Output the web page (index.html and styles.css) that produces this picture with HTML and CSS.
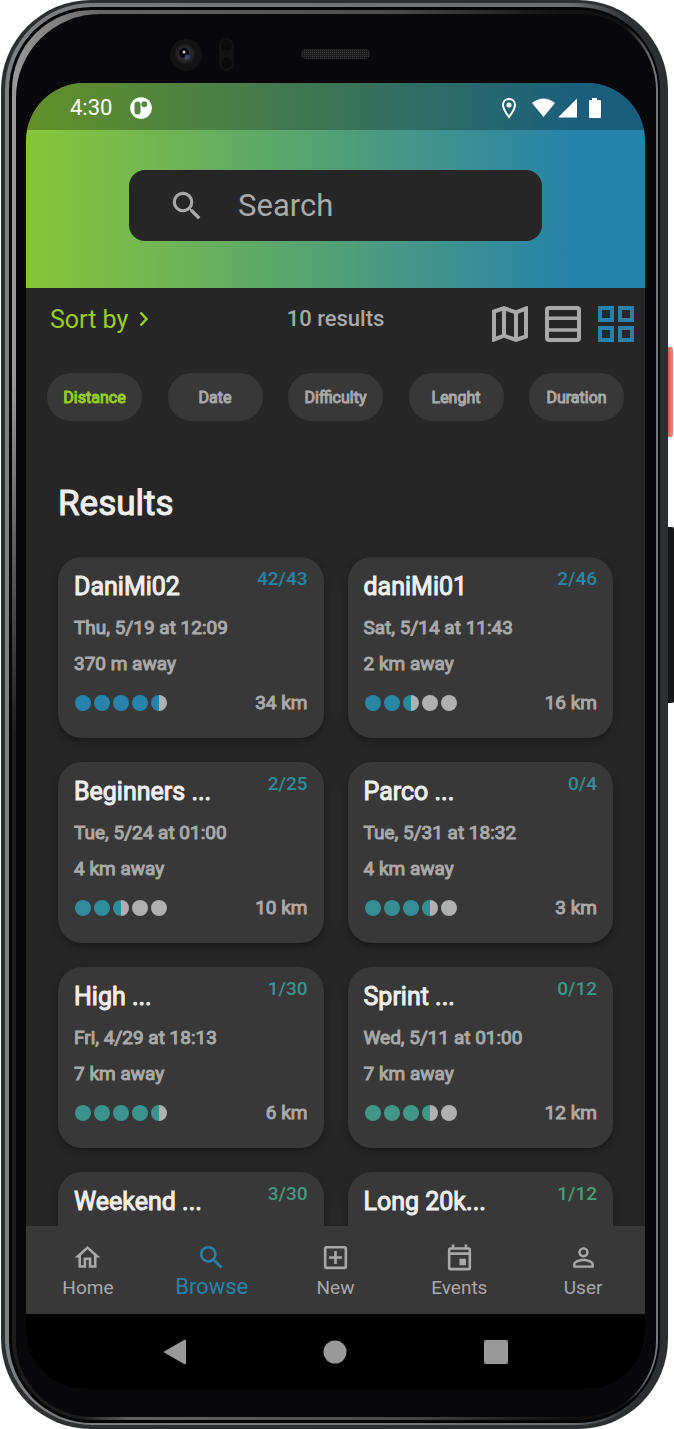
FILE: index.html
```html
<!DOCTYPE html>
<html lang="en">
<head>
<meta charset="utf-8">
<meta name="viewport" content="width=device-width, initial-scale=1">
<title>Browse</title>
<link rel="stylesheet" href="styles.css">
</head>
<body>
<div class="device">
  <span class="side-key power"></span>
  <span class="side-key volume"></span>
  <div class="rim"><div class="groove"><div class="bezel"><div class="glass">
    <svg class="sensors" viewBox="0 0 619 69" aria-hidden="true">
      <defs>
        <pattern id="mesh" width="2" height="2" patternUnits="userSpaceOnUse"><rect width="2" height="2" fill="#1c1c1c"/><rect width="1" height="1" fill="#353535"/></pattern>
        <radialGradient id="lens"><stop offset="0" stop-color="#30364a"/><stop offset=".6" stop-color="#2b2b2d"/><stop offset="1" stop-color="#1a1a1b"/></radialGradient>
      </defs>
      <circle cx="160" cy="41" r="16" fill="#131314"/>
      <circle cx="159" cy="40" r="10" fill="url(#lens)"/>
      <circle cx="158" cy="39" r="5" fill="#08080c"/>
      <circle cx="161" cy="43" r="2.500" fill="#3a4670"/>
      <circle cx="158" cy="38" r="1.500" fill="#c8c8c8"/>
      <rect x="193" y="24" width="15" height="33" rx="7.500" fill="#121213"/>
      <circle cx="200.500" cy="31" r="5.500" fill="#0a0a0b"/><circle cx="200.500" cy="49" r="5.500" fill="#0a0a0b"/>
      <rect x="275" y="35" width="69" height="10" rx="5" fill="url(#mesh)"/>
    </svg>
    <div class="screen">
      <header class="header">
        <div class="status">
          <span class="clock">4:30</span>
          <svg width="22" height="22" viewBox="0 0 22 22" aria-hidden="true"><circle cx="11" cy="11" r="10.800" fill="#fff"/><rect x="4.500" y="4.500" width="6" height="13" rx="3" fill="#53853f"/><circle cx="14.300" cy="7.200" r="2.900" fill="#53853f"/></svg>
          <svg class="status-right" width="102" height="24" viewBox="0 0 102 24" fill="#fff" aria-hidden="true">
            <path fill="none" stroke="#fff" stroke-width="2" d="M9 3c-3.500 0-6 2.600-6 6 0 4.200 6 12 6 12s6-7.800 6-12c0-3.400-2.500-6-6-6z"/><circle cx="9" cy="9" r="2.500"/>
            <path d="M32 7Q43.500-2 55 7L43.500 21z"/><path d="M58 21.500L77 2.500V21.500z"/>
            <path d="M92 2h5v2h3a1 1 0 0 1 1 1v16a1 1 0 0 1-1 1H90a1 1 0 0 1-1-1V5a1 1 0 0 1 1-1h2z"/>
          </svg>
        </div>
        <label class="search">
          <svg width="38" height="38" viewBox="0 0 24 24" fill="#a9a9a9" aria-hidden="true"><path d="M15.500 14h-.79l-.28-.27A6.470 6.470 0 0 0 16 9.500 6.500 6.500 0 1 0 9.500 16c1.610 0 3.090-.59 4.230-1.570l.27.28v.79l5 4.990L20.490 19zm-6 0C7.010 14 5 11.990 5 9.500S7.010 5 9.500 5 14 7.010 14 9.500 11.990 14 9.500 14z"/></svg>
          <input type="search" placeholder="Search" aria-label="Search">
        </label>
      </header>
      <div class="toolbar">
        <button class="sort">Sort by <svg width="24" height="24" viewBox="0 0 24 24" fill="none" stroke="currentColor" stroke-width="2.500" aria-hidden="true"><path d="M8.500 5.500L14.500 12 8.500 18.500"/></svg></button>
        <span class="total">10 results</span>
        <div class="views">
          <button aria-label="Map"><svg viewBox="0 0 24 24" fill="currentColor"><path d="M20.500 3l-.16.03L15 5.100 9 3 3.360 4.900c-.21.070-.36.250-.36.480V20.500c0 .280.220.500.500.500l.16-.03L9 18.900l6 2.100 5.640-1.900c.21-.07.360-.25.360-.48V3.500c0-.28-.22-.5-.5-.5zM10 5.470l4 1.400v11.660l-4-1.400V5.470zm-5 .99l3-1.010v11.700l-3 1.160V6.460zm14 11.080l-3 1.010V6.860l3-1.160v11.840z"/></svg></button>
          <button aria-label="List"><svg viewBox="0 0 24 24" fill="none" stroke="currentColor" stroke-width="2"><rect x="4" y="4" width="16" height="16" rx="1"/><path d="M4 9.100h16M4 15h16" stroke-width="1.700"/></svg></button>
          <button class="active" aria-label="Grid"><svg viewBox="0 0 24 24" fill="none" stroke="currentColor" stroke-width="2"><path d="M4 4h6v6H4zM14 4h6v6h-6zM4 14h6v6H4zM14 14h6v6h-6z"/></svg></button>
        </div>
      </div>
      <div class="chips">
        <button class="chip active">Distance</button>
        <button class="chip">Date</button>
        <button class="chip">Difficulty</button>
        <button class="chip">Lenght</button>
        <button class="chip">Duration</button>
      </div>
      <main class="results">
        <h1>Results</h1>
        <div class="grid">
          <article class="card c1"><div class="row"><h2>DaniMi02</h2><span class="count">42/43</span></div><p>Thu, 5/19 at 12:09</p><p>370 m away</p><div class="row foot"><span class="dots"><i class="on"></i><i class="on"></i><i class="on"></i><i class="on"></i><i class="half"></i></span><span>34 km</span></div></article>
          <article class="card c2"><div class="row"><h2>daniMi01</h2><span class="count">2/46</span></div><p>Sat, 5/14 at 11:43</p><p>2 km away</p><div class="row foot"><span class="dots"><i class="on"></i><i class="on"></i><i class="half"></i><i></i><i></i></span><span>16 km</span></div></article>
          <article class="card c3"><div class="row"><h2>Beginners ...</h2><span class="count">2/25</span></div><p>Tue, 5/24 at 01:00</p><p>4 km away</p><div class="row foot"><span class="dots"><i class="on"></i><i class="on"></i><i class="half"></i><i></i><i></i></span><span>10 km</span></div></article>
          <article class="card c4"><div class="row"><h2>Parco ...</h2><span class="count">0/4</span></div><p>Tue, 5/31 at 18:32</p><p>4 km away</p><div class="row foot"><span class="dots"><i class="on"></i><i class="on"></i><i class="on"></i><i class="half"></i><i></i></span><span>3 km</span></div></article>
          <article class="card c5"><div class="row"><h2>High ...</h2><span class="count">1/30</span></div><p>Fri, 4/29 at 18:13</p><p>7 km away</p><div class="row foot"><span class="dots"><i class="on"></i><i class="on"></i><i class="on"></i><i class="on"></i><i class="half"></i></span><span>6 km</span></div></article>
          <article class="card c6"><div class="row"><h2>Sprint ...</h2><span class="count">0/12</span></div><p>Wed, 5/11 at 01:00</p><p>7 km away</p><div class="row foot"><span class="dots"><i class="on"></i><i class="on"></i><i class="on"></i><i class="half"></i><i></i></span><span>12 km</span></div></article>
          <article class="card c7"><div class="row"><h2>Weekend ...</h2><span class="count">3/30</span></div></article>
          <article class="card c8"><div class="row"><h2>Long 20k...</h2><span class="count">1/12</span></div></article>
        </div>
      </main>
      <nav class="tabs">
        <a href="#home"><svg viewBox="0 0 24 24" fill="currentColor"><path d="M12 5.690l5 4.500V18h-2v-6H9v6H7v-7.810l5-4.500M12 3L2 12h3v8h6v-6h2v6h6v-8h3L12 3z"/></svg>Home</a>
        <a class="active" href="#browse"><svg viewBox="0 0 24 24" fill="currentColor"><path d="M15.500 14h-.79l-.28-.27A6.470 6.470 0 0 0 16 9.500 6.500 6.500 0 1 0 9.500 16c1.610 0 3.090-.59 4.230-1.570l.27.28v.79l5 4.990L20.490 19zm-6 0C7.010 14 5 11.990 5 9.500S7.010 5 9.500 5 14 7.010 14 9.500 11.990 14 9.500 14z"/></svg>Browse</a>
        <a href="#new"><svg viewBox="0 0 24 24" fill="currentColor"><path d="M19 3H5a2 2 0 0 0-2 2v14a2 2 0 0 0 2 2h14a2 2 0 0 0 2-2V5a2 2 0 0 0-2-2zm0 16H5V5h14v14zm-8-2h2v-4h4v-2h-4V7h-2v4H7v2h4z"/></svg>New</a>
        <a href="#events"><svg viewBox="0 0 24 24" fill="currentColor"><path d="M19 4h-1V2h-2v2H8V2H6v2H5a2 2 0 0 0-2 2v14a2 2 0 0 0 2 2h14a2 2 0 0 0 2-2V6a2 2 0 0 0-2-2zm0 16H5V10h14v10zm0-12H5V6h14v2zm-7 5h5v5h-5z"/></svg>Events</a>
        <a href="#user"><svg viewBox="0 0 24 24" fill="currentColor"><path d="M12 5.900a2.100 2.100 0 1 1 0 4.200 2.100 2.100 0 0 1 0-4.200m0 9c2.970 0 6.100 1.460 6.100 2.100v1.100H5.900V17c0-.64 3.130-2.100 6.100-2.100M12 4C9.790 4 8 5.790 8 8s1.790 4 4 4 4-1.790 4-4-1.790-4-4-4zm0 9c-2.670 0-8 1.340-8 4v3h16v-3c0-2.660-5.330-4-8-4z"/></svg>User</a>
      </nav>
      <div class="system">
        <button aria-label="Back"><svg width="24" height="26" viewBox="0 0 24 26"><path d="M2 13L22 1.500V24.500z" fill="#999" stroke="#999" stroke-width="2" stroke-linejoin="round"/></svg></button>
        <button aria-label="Home screen"><svg width="24" height="24" viewBox="0 0 24 24"><circle cx="12" cy="12" r="11.500" fill="#999"/></svg></button>
        <button aria-label="Recent apps"><svg width="24" height="24" viewBox="0 0 24 24"><rect width="24" height="24" rx="2" fill="#999"/></svg></button>
      </div>
    </div>
  </div></div></div></div>
</div>
</body>
</html>
```
FILE: styles.css
```css
* { box-sizing: border-box; }
body {
  margin: 0;
  background: #fff;
  font-family: Roboto, "Liberation Sans", sans-serif;
  color: #a9a9a9;
}
h1, h2, p { margin: 0; }
button {
  font: inherit;
  color: inherit;
  background: none;
  border: 0;
  padding: 0;
}
svg { display: block; }

/* Phone body */
.device {
  position: relative;
  height: 100vh;
  min-height: 900px;
  margin: 0 6px 0 1px;
  padding: 3px 3px 4px 4px;
  border-radius: 90px;
  background: #2c2f2f;
}
.rim, .groove, .bezel, .glass { height: 100%; }
.rim {
  padding: 4px 5px 2px 4px;
  border-radius: 87px;
  background: linear-gradient(90deg, #7c8083 0, #6a6e71 86%, #2c2f31 95%);
}
.groove {
  padding: 3px 2px 3px 3px;
  border-radius: 83px;
  background: #050506;
}
.bezel {
  padding: 4px 2px 3px 4px;
  border-radius: 80px;
  background:
    radial-gradient(ellipse 120px 900px at 0 90%, #1c1c1c 60%, transparent),
    linear-gradient(90deg, #999 0, #666 14%, #4a4a4a 60%, #111 85%, #111 95%, #777 99%);
}
.glass {
  display: flex;
  flex-direction: column;
  padding: 0 11px 28px 10px;
  border-radius: 84px 76px 76px 76px;
  background: #08080a;
}
.sensors { width: 100%; height: 69px; flex: none; }
.side-key { position: absolute; left: 100%; width: 5px; }
.power { top: 347px; height: 90px; border-radius: 0 2px 2px 0; background: linear-gradient(90deg, #d9604c, #ee8a75); }
.volume { top: 527px; height: 176px; width: 6px; border-radius: 0 2px 2px 0; background: #161616; }

.screen {
  flex: 1;
  min-height: 0;
  display: flex;
  flex-direction: column;
  overflow: hidden;
  border-radius: 58px;
  background: #262626;
}

/* Header */
.header {
  flex: none;
  padding-bottom: 47px;
  background: linear-gradient(90deg, #87c43a 2%, #2682aa 89%);
}
.status {
  display: flex;
  align-items: center;
  gap: 18px;
  height: 47px;
  padding: 3px 43px 0 44px;
  background: rgba(0, 0, 0, .27);
  color: #fff;
}
.clock { font-size: 22px; line-height: 28px; }
.status-right { margin-left: auto; }
.search {
  display: flex;
  align-items: center;
  gap: 32px;
  width: 66.7%;
  height: 71px;
  margin: 40px auto 0;
  padding: 0 39px;
  border-radius: 16px;
  background: #262626;
}
.search svg { flex: none; }
.search input {
  flex: 1;
  min-width: 0;
  padding: 0;
  border: 0;
  outline: 0;
  background: none;
  font: 31px/40px Roboto, "Liberation Sans", sans-serif;
  color: #a9a9a9;
}
.search input::placeholder { color: #a9a9a9; opacity: 1; }

/* Emphasised text: regular letterforms, thickened */
.chip, h1, h2, .card { -webkit-text-stroke: 1px; font-weight: 400; }
.total, .count { -webkit-text-stroke: 0; font-weight: 500; }

/* Sort and view switch */
.toolbar {
  flex: none;
  display: grid;
  grid-template-columns: 1fr auto 1fr;
  padding: 12px 5px 13px;
}
.sort {
  display: flex;
  align-items: center;
  align-self: start;
  gap: 4px;
  height: 38px;
  padding-left: 19px;
  font-size: 25px;
  color: #9acd22;
}
.total { font-size: 22px; line-height: 38px; }
.views { display: flex; justify-content: flex-end; gap: 5px; }
.views svg { width: 48px; height: 48px; }
.views .active, .tabs .active { color: #2783ab; }
.chips {
  flex: none;
  display: flex;
  justify-content: space-between;
  padding: 12px 21px 0;
}
.chip {
  width: 95px;
  height: 48px;
  border-radius: 24px;
  background: #383838;
  font-size: 16px;
}
.chip.active { color: #9acd22; }

/* Results */
.results {
  flex: 1;
  min-height: 0;
  overflow: hidden;
  padding: 60px 32px 0;
}
h1 {
  font-size: 35px;
  line-height: 46px;
  color: #efefef;
}
.grid {
  display: grid;
  grid-template-columns: 1fr 1fr;
  gap: 24px;
  padding-top: 30px;
}
.card {
  min-height: 181px;
  padding: 8px 16px 16px;
  border-radius: 24px;
  background: #383838;
  box-shadow: 0 3px 6px rgba(0, 0, 0, .35);
  font-size: 19px;
}
.row { display: flex; justify-content: space-between; }
h2 {
  padding-top: 6px;
  font-size: 25px;
  line-height: 32px;
  color: #efefef;
}
.count { line-height: 28px; color: var(--tint); }
.card p { line-height: 36px; }
.card .row + p { padding-top: 7px; }
.foot { align-items: center; padding-top: 4px; line-height: 34px; }
.dots { display: flex; gap: 3px; padding-left: 1px; }
.dots i { width: 16px; height: 16px; border-radius: 50%; background: #b0b0b0; }
.dots .on { background: var(--tint); }
.dots .half { background: linear-gradient(90deg, var(--tint) 50%, #b0b0b0 50%); }
.c1 { --tint: #2783ab; }
.c2 { --tint: #2a87a3; }
.c3 { --tint: #308b9b; }
.c4 { --tint: #368e94; }
.c5 { --tint: #3c928d; }
.c6 { --tint: #429686; }
.c7 { --tint: #48997e; }
.c8 { --tint: #4c9d79; }

/* Tabs */
.tabs {
  flex: none;
  display: grid;
  grid-template-columns: repeat(5, 1fr);
  height: 88px;
  background: #383838;
}
.tabs a {
  display: flex;
  flex-direction: column;
  align-items: center;
  padding-top: 16px;
  font-size: 19px;
  line-height: 30px;
  color: #a9a9a9;
  text-decoration: none;
}
.tabs a.active { font-size: 22px; line-height: 28px; }
.tabs svg { width: 31px; height: 31px; }
.system {
  flex: none;
  display: grid;
  grid-template-columns: repeat(3, 1fr);
  justify-items: center;
  align-items: center;
  height: 75px;
  padding: 0 69px;
  background: #000;
}
```
